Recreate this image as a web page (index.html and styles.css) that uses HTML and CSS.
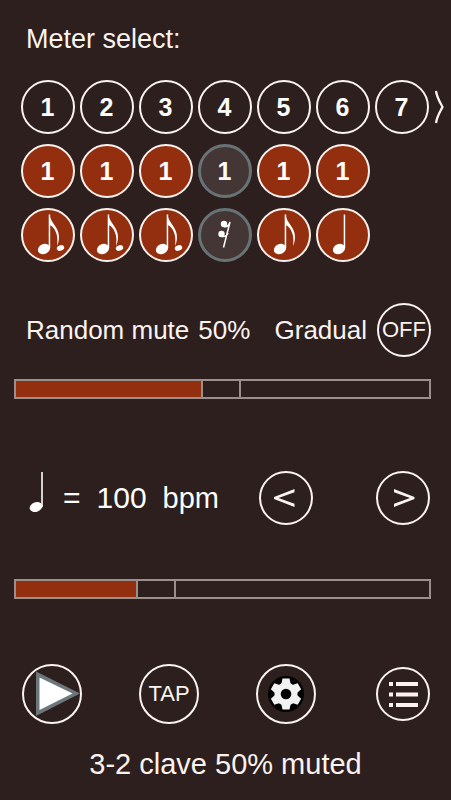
FILE: index.html
```html
<!DOCTYPE html>
<html lang="en">
<head>
<meta charset="utf-8">
<meta name="viewport" content="width=device-width, initial-scale=1">
<title>Metronome</title>
<link rel="stylesheet" href="styles.css">
</head>
<body>
<svg class="sprite" aria-hidden="true">
  <symbol id="quarter" viewBox="0 0 54 54">
    <ellipse cx="23" cy="41" rx="6.300" ry="5" transform="rotate(-25 23 41)"/>
    <path d="M27.700 6.500h1.500V40H27.700z"/>
  </symbol>
  <symbol id="eighth" viewBox="0 0 54 54">
    <use href="#quarter"/>
    <path d="M28.500 6.500C29.500 15 38 19 38 29C38 32.500 37.200 35.500 36 38C36.500 33 36.800 29 35 24.500C33.500 20.500 31.500 18 28.500 17z"/>
  </symbol>
  <symbol id="dotted-eighth" viewBox="0 0 54 54">
    <use href="#eighth"/>
    <ellipse cx="39.500" cy="40" rx="3.800" ry="2.700" transform="rotate(-20 39.500 40)"/>
  </symbol>
  <symbol id="rest" viewBox="0 0 54 54">
    <circle cx="26" cy="16" r="3.200"/>
    <circle cx="23.500" cy="26" r="3.200"/>
    <path d="M26 18.500C29 19.500 31 17.500 32 14L25.500 39.500M24 28.500C27 29 29 27.500 30 25" fill="none" stroke="currentColor" stroke-width="1.500"/>
  </symbol>
</svg>
<main class="app">
  <h1 class="title">Meter select:</h1>

  <section class="meter" aria-label="Meter">
    <div class="beats">
      <button class="round number">1</button>
      <button class="round number">2</button>
      <button class="round number">3</button>
      <button class="round number">4</button>
      <button class="round number">5</button>
      <button class="round number">6</button>
      <button class="round number">7</button>
    </div>
    <button class="more" aria-label="More meters">
      <svg viewBox="0 0 14 34" width="14" height="34"><path d="M2 1C3 8 6 12 8.500 17C6 22 3 26 2 33" fill="none" stroke="currentColor" stroke-width="2.300"/></svg>
    </button>
    <div class="beats">
      <button class="round number on">1</button>
      <button class="round number on">1</button>
      <button class="round number on">1</button>
      <button class="round number muted">1</button>
      <button class="round number on">1</button>
      <button class="round number on">1</button>
    </div>
    <div class="beats">
      <button class="round on" aria-label="Dotted eighth"><svg class="note"><use href="#dotted-eighth"/></svg></button>
      <button class="round on" aria-label="Dotted eighth"><svg class="note"><use href="#dotted-eighth"/></svg></button>
      <button class="round on" aria-label="Dotted eighth"><svg class="note"><use href="#dotted-eighth"/></svg></button>
      <button class="round muted" aria-label="Rest"><svg class="note"><use href="#rest"/></svg></button>
      <button class="round on" aria-label="Eighth"><svg class="note"><use href="#eighth"/></svg></button>
      <button class="round on" aria-label="Quarter"><svg class="note"><use href="#quarter"/></svg></button>
    </div>
  </section>

  <section class="mute">
    <label class="mute-label" for="mute"><span>Random mute</span><span>50%</span></label>
    <label class="gradual" for="gradual">Gradual</label>
    <button class="round caption" id="gradual">OFF</button>
  </section>
  <input class="slider" id="mute" type="range" min="0" max="1000" value="495" style="--level: 0.495">

  <section class="tempo">
    <label class="bpm" for="tempo">
      <svg class="tempo-note" viewBox="0 0 18 42" width="18" height="42" aria-hidden="true"><ellipse cx="7" cy="36" rx="6.500" ry="4.800" transform="rotate(-20 7 36)"/><path d="M12 1h2v35h-2z" opacity=".8"/></svg>
      <span class="equals">=</span><span class="value">100</span><span>bpm</span>
    </label>
    <div class="steppers">
      <div class="cell"><button class="round" aria-label="Slower"><svg class="note" viewBox="0 0 54 54"><path d="M35.500 18L15 26v2L35.500 36v-3.200L19.500 27L35.500 21.200z"/></svg></button></div>
      <div class="cell"><button class="round" aria-label="Faster"><svg class="note" viewBox="0 0 54 54"><path d="M18 18L38.500 26v2L18 36v-3.200L34 27L18 21.200z"/></svg></button></div>
    </div>
  </section>
  <input class="slider" id="tempo" type="range" min="0" max="1000" value="322" style="--level: 0.322">

  <nav class="controls">
    <button class="round large" aria-label="Play"><svg viewBox="0 0 60 60" width="60" height="60"><path d="M14 7.500L58 29.500L14 52z" fill="#6d777b"/><path d="M17.500 13.500L50.500 29.500L17.500 46z" fill="#fff"/></svg></button>
    <button class="round large caption">TAP</button>
    <button class="round large" aria-label="Settings"><svg viewBox="0 0 60 60" width="60" height="60"><circle cx="30" cy="30" r="18" fill="#000"/><g fill="#f2f2f2"><circle cx="30" cy="30" r="11.500"/><path id="tooth" d="M26.500 14.500h7l1.500 7h-10z"/><use href="#tooth" transform="rotate(60 30 30)"/><use href="#tooth" transform="rotate(120 30 30)"/><use href="#tooth" transform="rotate(180 30 30)"/><use href="#tooth" transform="rotate(240 30 30)"/><use href="#tooth" transform="rotate(300 30 30)"/></g><circle cx="30" cy="30" r="5.300" fill="#000"/></svg></button>
    <div class="cell"><button class="round" aria-label="Presets"><svg class="note" viewBox="0 0 54 54"><path d="M13 15h4v4h-4zM20 15h22v4H20zM13 25.500h4v4h-4zM20 25.500h22v4H20zM13 36h4v4h-4zM20 36h22v4H20z"/></svg></button></div>
  </nav>

  <p class="status">3-2 clave 50% muted</p>
</main>
</body>
</html>
```
FILE: styles.css
```css
* {
  box-sizing: border-box;
}

body {
  margin: 0;
  background: #2c1f1d;
  color: #fbf3ef;
  font-family: "Liberation Sans", Arial, sans-serif;
  font-size: 26px;
  line-height: 32px;
}

button {
  padding: 0;
  color: inherit;
  font: inherit;
  background: none;
  border: 0;
}

svg {
  display: block;
  fill: currentColor;
}

.sprite {
  position: absolute;
  width: 0;
  height: 0;
}

.app {
  display: flex;
  flex-direction: column;
}

.title {
  margin: 23px 26px 25px;
  font-size: 27px;
  font-weight: 400;
}

.meter {
  display: grid;
  grid-template-columns: 1fr 20px;
  row-gap: 10px;
  padding-left: 18px;
}

.beats {
  grid-column: 1;
  display: grid;
  grid-template-columns: repeat(7, 1fr);
  justify-items: center;
}

.more {
  display: grid;
  place-items: center;
}

.round {
  display: grid;
  place-items: center;
  width: 54px;
  height: 54px;
  border: 2px solid #fbf3ef;
  border-radius: 50%;
}

.round > svg {
  margin: -2px;
}

.large {
  width: 60px;
  height: 60px;
}

.number {
  color: #fff;
  font-size: 25px;
  font-weight: 700;
}

.on {
  color: #fff;
  background: #932f0f;
}

.muted {
  color: #fff;
  background: #443634;
  border: 3px solid #687378;
}

.muted > svg {
  margin: -3px;
}

.caption {
  font-size: 22px;
}

.note {
  width: 54px;
  height: 54px;
}

.mute {
  display: flex;
  align-items: center;
  margin-top: 41px;
  padding: 0 20px 0 26px;
}

.mute-label {
  display: flex;
  gap: 9px;
  flex: 1;
}

.gradual {
  margin-right: 10px;
}

.slider {
  appearance: none;
  height: 20px;
  margin: 22px 20px 0 14px;
  border: 2px solid #9b8f8c;
  background: linear-gradient(#932f0f, #932f0f) no-repeat 0 0 / calc((100% - 38px) * var(--level) + 2px) 100%;
}

.slider::-webkit-slider-thumb {
  appearance: none;
  width: 40px;
  height: 16px;
  border: solid #9b8f8c;
  border-width: 0 2px;
  background: #2c1f1d;
}

.tempo {
  display: flex;
  align-items: center;
  justify-content: space-between;
  margin-top: 72px;
  padding: 0 18px 0 29px;
}

.bpm {
  display: flex;
  align-items: center;
  gap: 16px;
  color: #fff;
  font-size: 29px;
}

.tempo-note {
  margin-top: -12px;
}

.equals,
.value {
  font-size: 30px;
}

.steppers {
  display: flex;
  gap: 57px;
}

.cell {
  display: grid;
  place-items: center;
  width: 60px;
}

#tempo {
  margin-top: 54px;
}

.controls {
  display: flex;
  align-items: center;
  justify-content: space-between;
  margin-top: 65px;
  padding: 0 18px 0 22px;
}

.status {
  margin: 24px 0;
  font-size: 29px;
  text-align: center;
}
```
